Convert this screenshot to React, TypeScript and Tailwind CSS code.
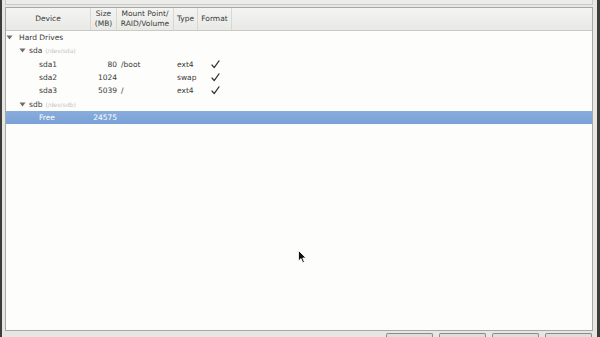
import React from "react";

const Tri = () => (
  <svg width="7" height="5" viewBox="0 0 7 5" className="shrink-0">
    <polygon points="0.5,0.5 6.5,0.5 3.5,4.5" fill="#6c6c6a" />
  </svg>
);

const Check = ({ white = false }: { white?: boolean }) => (
  <svg width="9" height="9" viewBox="0 0 9 9">
    <path d="M1 5 L3.2 7.6 L8 0.8" fill="none" stroke={white ? "#fff" : "#333"} strokeWidth="1.2" strokeLinecap="round" strokeLinejoin="round" />
  </svg>
);

type Row = {
  level: number;
  expander?: boolean;
  name: string;
  sub?: string;
  size?: string;
  mount?: string;
  type?: string;
  format?: boolean;
  selected?: boolean;
};

const rows: Row[] = [
  { level: 0, expander: true, name: "Hard Drives" },
  { level: 1, expander: true, name: "sda", sub: "(/dev/sda)" },
  { level: 2, name: "sda1", size: "80", mount: "/boot", type: "ext4", format: true },
  { level: 2, name: "sda2", size: "1024", type: "swap", format: true },
  { level: 2, name: "sda3", size: "5039", mount: "/", type: "ext4", format: true },
  { level: 1, expander: true, name: "sdb", sub: "(/dev/sdb)" },
  { level: 2, name: "Free", size: "24575", selected: true },
];

export default function App() {
  return (
    <div
      className="relative w-[600px] h-[337px] overflow-hidden bg-[#e6e6e3] border-l-2 border-r-[3px] border-[#3c3c3a] flex flex-col text-[7.5px] text-[#3a3a38]"
      style={{ fontFamily: '"DejaVu Sans", "Liberation Sans", sans-serif' }}
    >
      <div className="ml-[3px] mr-[4px] h-[5px] border-x border-b border-[#cbcbc7] bg-[#ececea]" />
      <div className="ml-[3px] mr-[4px] mt-[2px] h-[326px] border border-[#a8a8a4] bg-[#fdfdfc] flex flex-col">
        <div className="flex h-[23px] border-b border-[#c9c9c5] bg-gradient-to-b from-[#f4f4f2] to-[#e9e9e6]">
          <div className="w-[85px] flex items-center justify-center border-r border-[#d8d8d4]">Device</div>
          <div className="w-[26px] flex flex-col items-center justify-center leading-[10px] border-r border-[#d8d8d4]">
            <span>Size</span>
            <span>(MB)</span>
          </div>
          <div className="w-[57px] flex flex-col items-center justify-center leading-[10px] border-r border-[#d8d8d4]">
            <span>Mount Point/</span>
            <span>RAID/Volume</span>
          </div>
          <div className="w-[24px] flex items-center justify-center border-r border-[#d8d8d4]">Type</div>
          <div className="w-[34px] flex items-center justify-center border-r border-[#d8d8d4]">Format</div>
          <div className="flex-1" />
        </div>
        {rows.map((r, i) => (
          <div
            key={i}
            className={
              "flex h-[13.33px] items-center " +
              (r.selected ? "bg-gradient-to-b from-[#88acdd] to-[#7aa1d6] text-white" : "")
            }
          >
            <div className="w-[85px] flex items-center">
              {r.level === 0 && (
                <div className="flex items-center pl-[0px]">
                  <Tri />
                  <span className="ml-[6px]">{r.name}</span>
                </div>
              )}
              {r.level === 1 && (
                <div className="flex items-center pl-[13px]">
                  <Tri />
                  <span className="ml-[3px]">{r.name}</span>
                  <span className="ml-[3px] text-[6px] text-[#c4c4c0]">{r.sub}</span>
                </div>
              )}
              {r.level === 2 && <span className="pl-[33px]">{r.name}</span>}
            </div>
            <div className="w-[26px] text-right">{r.size}</div>
            <div className="w-[57px] pl-[4px]">{r.mount}</div>
            <div className="w-[24px] pl-[3px]">{r.type}</div>
            <div className="w-[34px] flex justify-center">{r.format && <Check white={r.selected} />}</div>
            <div className="flex-1" />
          </div>
        ))}
        <div className="flex-1" />
      </div>
      <div className="flex justify-end gap-[6px] pr-[5px] pt-[2px]">
        <div className="w-[47px] h-[4px] border-t border-x border-[#8c8c88] rounded-t-[2px] bg-[#dededb]" />
        <div className="w-[47px] h-[4px] border-t border-x border-[#8c8c88] rounded-t-[2px] bg-[#dededb]" />
        <div className="w-[47px] h-[4px] border-t border-x border-[#8c8c88] rounded-t-[2px] bg-[#dededb]" />
        <div className="w-[47px] h-[4px] border-t border-x border-[#8c8c88] rounded-t-[2px] bg-[#dededb]" />
      </div>
      <svg className="absolute left-[296px] top-[250px]" width="9" height="14" viewBox="0 0 9 14">
        <path d="M0.5 0.5 L0.5 11 L3 8.6 L4.8 12.8 L6.4 12.1 L4.7 8 L8 8 Z" fill="#111" stroke="#fff" strokeWidth="0.8" />
      </svg>
    </div>
  );
}
